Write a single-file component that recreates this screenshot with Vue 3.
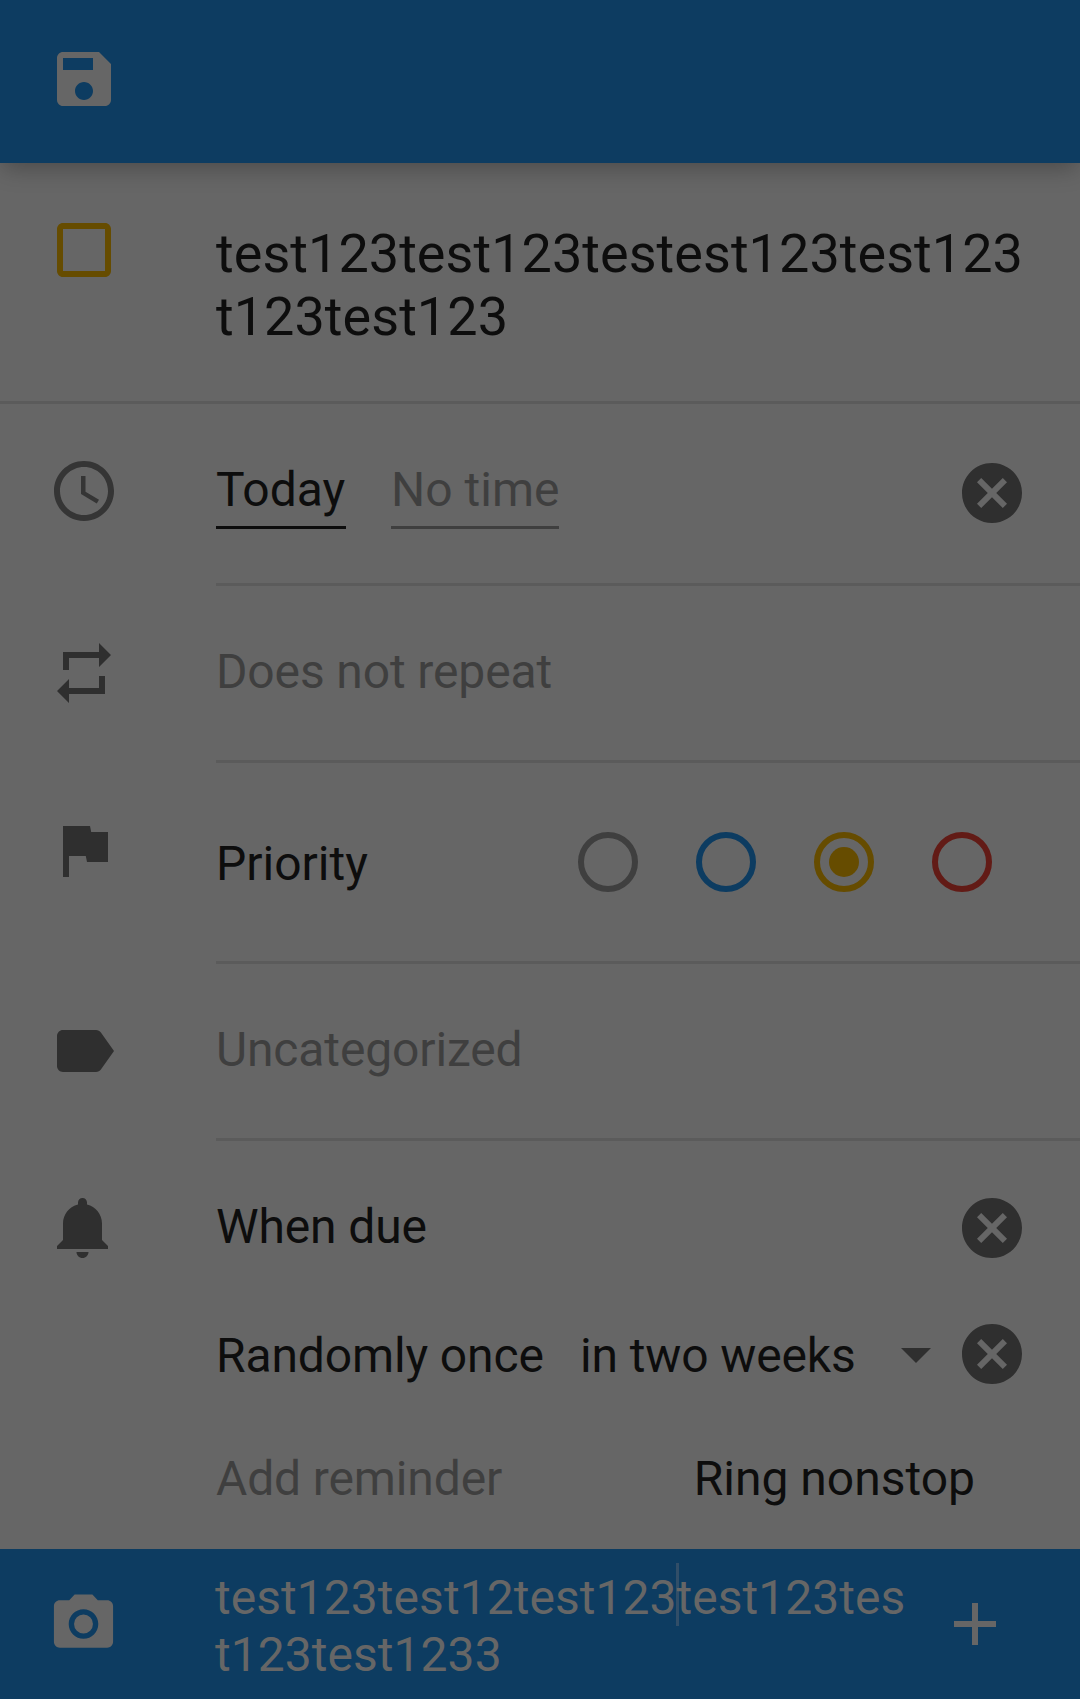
<script setup>
import { ref } from 'vue'

const icons = {
  save: 'M17 3H5c-1.11 0-2 .9-2 2v14c0 1.1.89 2 2 2h14c1.1 0 2-.9 2-2V7l-4-4zm-5 16c-1.66 0-3-1.34-3-3s1.34-3 3-3 3 1.34 3 3-1.34 3-3 3zm3-10H5V5h10v4z',
  box: 'M19 5v14H5V5h14m0-2H5c-1.1 0-2 .9-2 2v14c0 1.1.9 2 2 2h14c1.1 0 2-.9 2-2V5c0-1.1-.9-2-2-2z',
  clock: 'M11.99 2C6.47 2 2 6.48 2 12s4.47 10 9.99 10C17.52 22 22 17.52 22 12S17.52 2 11.99 2zM12 20c-4.42 0-8-3.58-8-8s3.58-8 8-8 8 3.58 8 8-3.58 8-8 8zM12.5 7H11v6l5.25 3.15.75-1.23-4.5-2.67z',
  repeat: 'M7 7h10v3l4-4-4-4v3H5v6h2V7zm10 10H7v-3l-4 4 4 4v-3h12v-6h-2v4z',
  flag: 'M14.4 6L14 4H5v17h2v-7h5.6l.4 2h7V6z',
  label: 'M17.63 5.84C17.27 5.33 16.67 5 16 5L5 5.01C3.9 5.01 3 5.9 3 7v10c0 1.1.9 1.99 2 1.99L16 19c.67 0 1.27-.33 1.63-.84L22 12l-4.37-6.16z',
  bell: 'M11.5 22c1.1 0 2-.9 2-2h-4c0 1.1.9 2 2 2zm6.5-6v-5.5c0-3.07-2.13-5.64-5-6.32V3.5c0-.83-.67-1.5-1.5-1.5S10 2.67 10 3.5v.68c-2.87.68-5 3.25-5 6.32V16l-2 2v1h17v-1l-2-2z',
  cancel: 'M12 2C6.47 2 2 6.47 2 12s4.47 10 10 10 10-4.47 10-10S17.53 2 12 2zm5 13.59L15.59 17 12 13.41 8.41 17 7 15.59 10.59 12 7 8.41 8.41 7 12 10.59 15.59 7 17 8.41 13.41 12 17 15.59z',
  plus: 'M19 13h-6v6h-2v-6H5v-2h6V5h2v6h6v2z',
  camera: 'M9 2L7.17 4H4c-1.1 0-2 .9-2 2v12c0 1.1.9 2 2 2h16c1.1 0 2-.9 2-2V6c0-1.1-.9-2-2-2h-3.17L15 2H9zm3 15c-2.76 0-5-2.24-5-5s2.24-5 5-5 5 2.24 5 5-2.24 5-5 5zm0-1.8a3.2 3.2 0 1 0 0-6.4 3.2 3.2 0 0 0 0 6.4z'
}

const priorities = ['none', 'low', 'medium', 'high']
const selected = ref('medium')
</script>

<template>
  <div class="screen">
    <header class="toolbar">
      <svg class="icon light" viewBox="0 0 24 24"><path :d="icons.save" /></svg>
    </header>

    <section class="title-row">
      <svg class="icon amber" viewBox="0 0 24 24"><path :d="icons.box" /></svg>
      <h1 class="title">test123test123testest123test123<br>t123test123</h1>
    </section>

    <section class="row date">
      <svg class="icon clock" viewBox="0 0 24 24"><path :d="icons.clock" /></svg>
      <div class="content">
        <span class="field day">Today</span>
        <span class="field time hint">No time</span>
        <svg class="icon clear" viewBox="0 0 24 24"><path :d="icons.cancel" /></svg>
      </div>
    </section>

    <section class="row repeat">
      <svg class="icon" viewBox="0 0 24 24"><path :d="icons.repeat" /></svg>
      <div class="content"><span class="hint">Does not repeat</span></div>
    </section>

    <section class="row priority">
      <svg class="icon" viewBox="0 0 24 24"><path :d="icons.flag" /></svg>
      <div class="content">
        <span>Priority</span>
        <div class="radios">
          <button
            v-for="p in priorities"
            :key="p"
            :class="['radio', p, { on: selected === p }]"
            :aria-label="p"
            @click="selected = p"
          ></button>
        </div>
      </div>
    </section>

    <section class="row category">
      <svg class="icon" viewBox="0 0 24 24"><path :d="icons.label" /></svg>
      <div class="content"><span class="hint">Uncategorized</span></div>
    </section>

    <section class="row reminders">
      <svg class="icon" viewBox="0 0 24 24"><path :d="icons.bell" /></svg>
      <div class="content">
        <div class="line due">
          <span>When due</span>
          <svg class="icon clear" viewBox="0 0 24 24"><path :d="icons.cancel" /></svg>
        </div>
        <div class="line random">
          <span class="once">Randomly once</span>
          <span>in two weeks</span>
          <svg class="caret-down" viewBox="0 0 30 15"><path d="M0 0l15 15 15-15z" /></svg>
          <svg class="icon" viewBox="0 0 24 24"><path :d="icons.cancel" /></svg>
        </div>
        <div class="line add">
          <span class="hint">Add reminder</span>
          <span class="ring">Ring nonstop</span>
        </div>
      </div>
    </section>

    <footer class="comment">
      <svg class="icon light camera" viewBox="0 0 24 24"><path :d="icons.camera" /></svg>
      <p class="draft">test123test12test123<i class="cursor"></i>test123tes<br>t123test1233</p>
      <svg class="icon light plus" viewBox="0 0 24 24"><path :d="icons.plus" /></svg>
    </footer>
  </div>
</template>

<style>
body {
  margin: 0;
  background: #666666;
}
</style>

<style scoped>
.screen {
  width: 1080px;
  height: 1699px;
  overflow: hidden;
  display: flex;
  flex-direction: column;
  background: #666666;
  color: #0d0d0d;
  font: 400 48px/56px Roboto, sans-serif;
  white-space: nowrap;
}
.screen > * {
  box-sizing: border-box;
  flex: none;
  display: flex;
  align-items: flex-start;
  padding-left: 48px;
}
.icon {
  flex: none;
  display: block;
  width: 72px;
  height: 72px;
  fill: #2f2f2f;
}
.light { fill: #666666; }
.amber { fill: #664c00; }
.clock { fill: #353535; }
.hint { color: #3f3f3f; }

.toolbar {
  position: relative;
  z-index: 1;
  height: 163px;
  padding-top: 43px;
  background: #0d3c61;
  box-shadow: 0 8px 22px -3px rgba(0, 0, 0, 0.28);
}
.title-row {
  height: 241px;
  padding-top: 51px;
  gap: 96px;
  border-bottom: 3px solid #5b5b5b;
}
.title {
  margin: 8px 0 0;
  font-size: 54px;
  font-weight: 400;
  line-height: 63px;
  letter-spacing: 0.04px;
}

.row {
  gap: 96px;
  letter-spacing: -0.13px;
}
.content {
  box-sizing: border-box;
  flex: 1;
  height: 100%;
  display: flex;
  align-items: flex-start;
  border-bottom: 3px solid #5b5b5b;
}
.date {
  height: 182px;
  letter-spacing: 0;
}
.date > .icon { margin-top: 51px; }
.date .content { padding: 53px 52px 0 0; }
.field {
  height: 72px;
  box-sizing: border-box;
  padding-top: 5px;
  border-bottom: 3px solid currentColor;
}
.day { width: 130px; }
.time {
  width: 168px;
  margin-left: 45px;
}
.clear { margin-left: auto; }

.repeat { height: 177px; }
.repeat > .icon { margin-top: 51px; }
.repeat .content { padding-top: 58px; }

.priority {
  height: 201px;
  letter-spacing: 0;
}
.priority > .icon { margin-top: 51px; }
.priority .content { padding: 69px 88px 0 0; }
.priority .content > span { margin-top: 4px; }
.radios {
  display: flex;
  gap: 58px;
  margin-left: auto;
}
.radio {
  width: 60px;
  height: 60px;
  padding: 9px;
  border: 6px solid currentColor;
  border-radius: 50%;
  background: none;
}
.radio.on::before {
  content: '';
  display: block;
  width: 30px;
  height: 30px;
  border-radius: 50%;
  background: currentColor;
}
.none { color: #3f3f3f; }
.low { color: #0d3c61; }
.medium { color: #664c00; }
.high { color: #621b16; }

.category { height: 177px; }
.category > .icon { margin-top: 51px; }
.category .content { padding-top: 58px; }

.reminders { height: 408px; }
.reminders > .icon { margin-top: 51px; }
.reminders .content {
  flex-direction: column;
  align-items: stretch;
  padding: 51px 52px 0 0;
  border: 0;
}
.line {
  flex: none;
  display: flex;
  height: 126px;
  align-items: flex-start;
}
.line > span { margin-top: 7px; }
.random > span { margin-top: 10px; }
.once { width: 364px; }
.caret-down {
  width: 30px;
  height: 15px;
  margin: 30px 25px 0 auto;
  fill: #2f2f2f;
}
.add {
  height: 105px;
  justify-content: space-between;
}
.add .ring {
  margin-right: 53px;
  letter-spacing: 0;
}

.comment {
  height: 150px;
  padding: 0 69px 0 48px;
  background: #0d3c61;
}
.comment .icon { margin-top: 39px; }
.comment .camera { width: 71px; }
.draft {
  margin: 20px 0 0 96px;
  color: #666666;
  line-height: 57px;
  letter-spacing: 0.04px;
}
.cursor {
  display: inline-block;
  width: 3px;
  height: 63px;
  margin: -10px -2px -12px -1px;
  vertical-align: 0;
  background: #314e68;
}
.comment .plus { margin-left: auto; }
</style>
